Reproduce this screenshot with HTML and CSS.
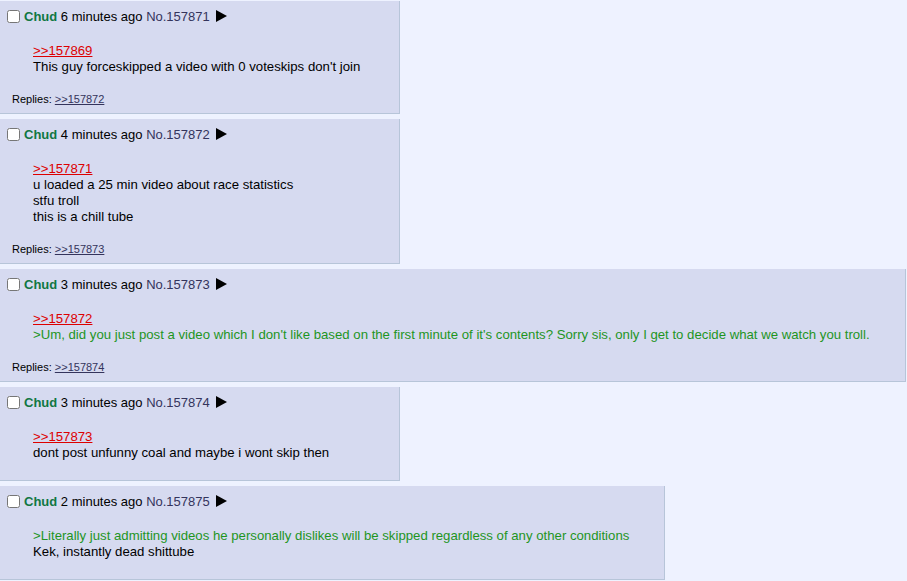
FILE: index.html
```html
<!DOCTYPE html>
<html>
<head>
<meta charset="utf-8">
<link rel="stylesheet" href="styles.css">
</head>
<body>
<div class="thread">
  <div class="post">
    <div class="post-header"><input type="checkbox" class="post-check"><span class="name">Chud</span> <span class="date">6 minutes ago</span> <span class="postnum">No.157871</span> <svg class="arrow" width="11" height="12" viewBox="0 0 11 12"><path d="M0 0 L11 6 L0 12 Z" fill="#000"/></svg></div>
    <div class="message">
      <a class="quotelink" href="#">&gt;&gt;157869</a><br>
      This guy forceskipped a video with 0 voteskips don't join
    </div>
    <div class="replies">Replies: <a href="#">&gt;&gt;157872</a></div>
  </div>
  <div class="post">
    <div class="post-header"><input type="checkbox" class="post-check"><span class="name">Chud</span> <span class="date">4 minutes ago</span> <span class="postnum">No.157872</span> <svg class="arrow" width="11" height="12" viewBox="0 0 11 12"><path d="M0 0 L11 6 L0 12 Z" fill="#000"/></svg></div>
    <div class="message">
      <a class="quotelink" href="#">&gt;&gt;157871</a><br>
      u loaded a 25 min video about race statistics<br>
      stfu troll<br>
      this is a chill tube
    </div>
    <div class="replies">Replies: <a href="#">&gt;&gt;157873</a></div>
  </div>
  <div class="post">
    <div class="post-header"><input type="checkbox" class="post-check"><span class="name">Chud</span> <span class="date">3 minutes ago</span> <span class="postnum">No.157873</span> <svg class="arrow" width="11" height="12" viewBox="0 0 11 12"><path d="M0 0 L11 6 L0 12 Z" fill="#000"/></svg></div>
    <div class="message">
      <a class="quotelink" href="#">&gt;&gt;157872</a><br>
      <span class="greentext">&gt;Um, did you just post a video which I don't like based on the first minute of it's contents? Sorry sis, only I get to decide what we watch you troll.</span>
    </div>
    <div class="replies">Replies: <a href="#">&gt;&gt;157874</a></div>
  </div>
  <div class="post">
    <div class="post-header"><input type="checkbox" class="post-check"><span class="name">Chud</span> <span class="date">3 minutes ago</span> <span class="postnum">No.157874</span> <svg class="arrow" width="11" height="12" viewBox="0 0 11 12"><path d="M0 0 L11 6 L0 12 Z" fill="#000"/></svg></div>
    <div class="message">
      <a class="quotelink" href="#">&gt;&gt;157873</a><br>
      dont post unfunny coal and maybe i wont skip then
    </div>
  </div>
  <div class="post">
    <div class="post-header"><input type="checkbox" class="post-check"><span class="name">Chud</span> <span class="date">2 minutes ago</span> <span class="postnum">No.157875</span> <svg class="arrow" width="11" height="12" viewBox="0 0 11 12"><path d="M0 0 L11 6 L0 12 Z" fill="#000"/></svg></div>
    <div class="message">
      <span class="greentext">&gt;Literally just admitting videos he personally dislikes will be skipped regardless of any other conditions</span><br>
      Kek, instantly dead shittube
    </div>
  </div>
</div>
</body>
</html>
```
FILE: styles.css
```css
html, body {
  margin: 0;
  padding: 0;
  background: #eef2ff;
}
body {
  font-family: "Liberation Sans", Arial, sans-serif;
  font-size: 13.2px;
  color: #000;
}
.thread {
  display: flex;
  flex-direction: column;
  align-items: flex-start;
  gap: 5px;
  padding-top: 1px;
}
.post {
  background: #d6daf0;
  border-right: 1px solid #b7c5d9;
  border-bottom: 1px solid #b7c5d9;
  min-width: 399px;
  max-width: calc(100% - 1px);
  box-sizing: content-box;
  padding-bottom: 4px;
}
.post-header {
  height: 16px;
  line-height: 16px;
  font-size: 13px;
  padding: 8px 0 0 7px;
  white-space: nowrap;
}
.post-check {
  width: 13px;
  height: 13px;
  margin: 0 4px 0 0;
  vertical-align: -2px;
}
.name {
  color: #117743;
  font-weight: bold;
}
.postnum {
  color: #34345c;
}
.arrow {
  vertical-align: -1px;
  margin-left: 3px;
}
.message {
  margin: 18px 35px 15px 33px;
  line-height: 16px;
}
.quotelink {
  color: #dd0000;
  text-decoration: underline;
}
.greentext {
  color: #1e951e;
}
.replies {
  font-size: 11px;
  line-height: 16px;
  padding: 1px 0 2px 12px;
}
.replies a {
  color: #34345c;
  text-decoration: underline;
}
```
